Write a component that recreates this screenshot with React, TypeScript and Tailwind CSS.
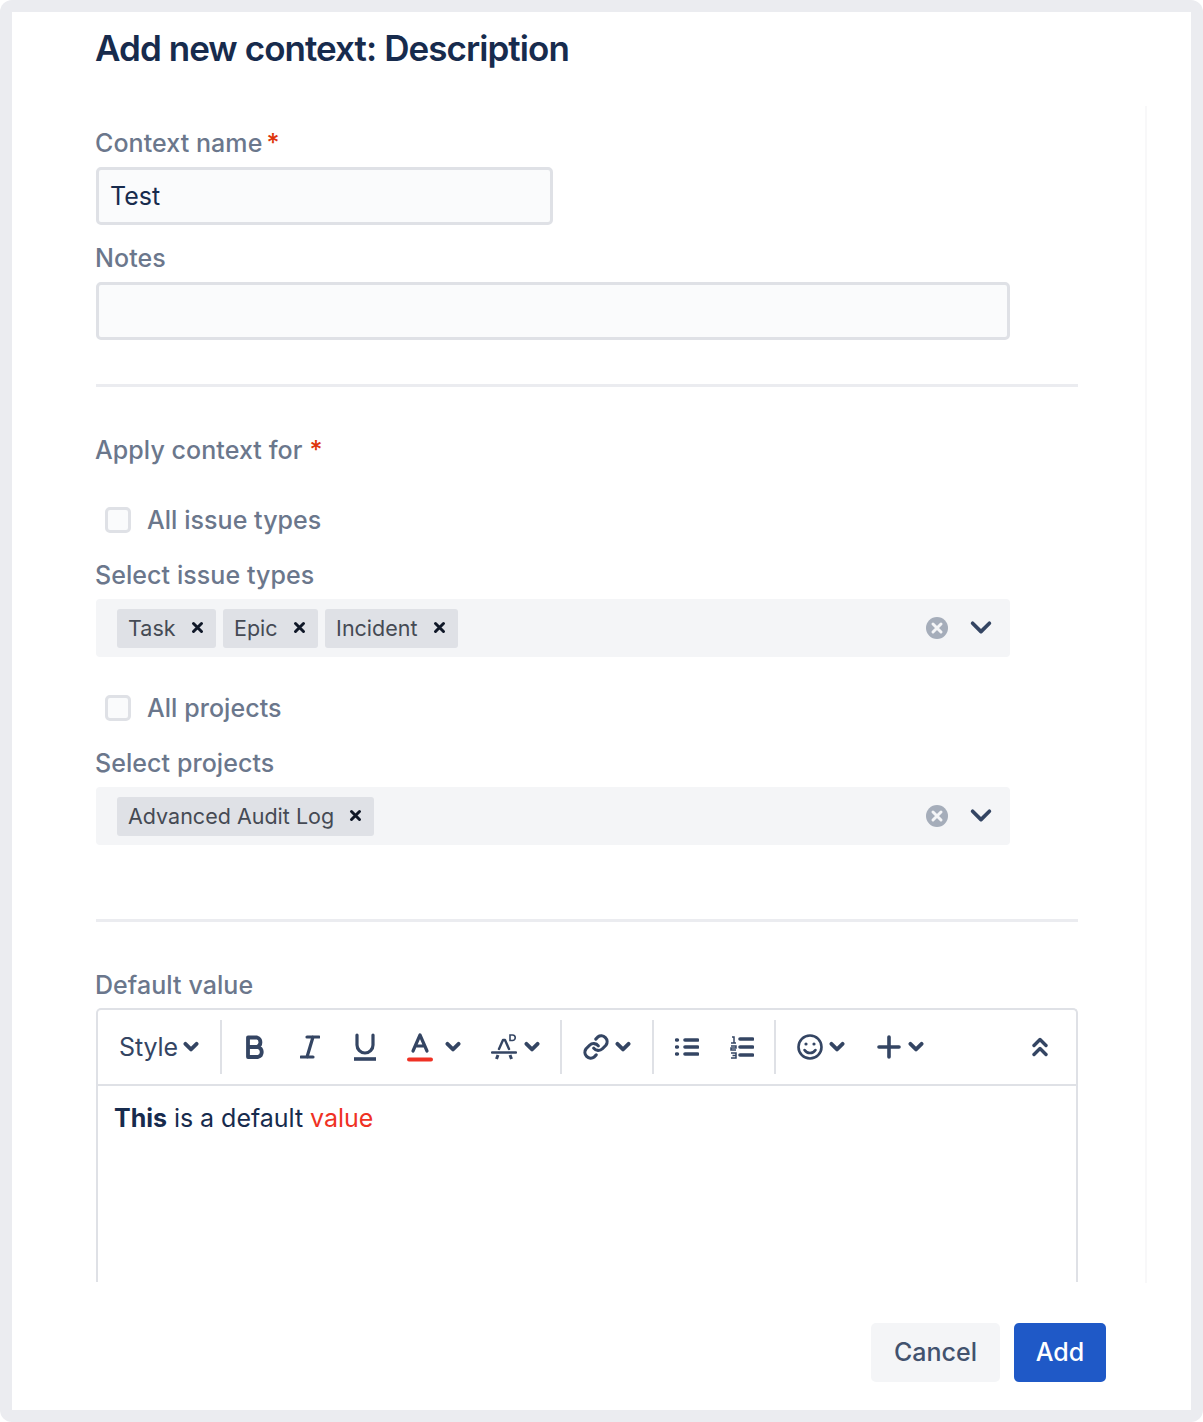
const F = { fontFamily: 'Inter, "Liberation Sans", sans-serif' };

function Label({ children, star, gap }: { children: React.ReactNode; star?: boolean; gap?: boolean }) {
  return (
    <div className="h-[28px] -ml-[1px] text-[25px] leading-[28px] font-medium text-[#6b778c] tracking-[0.07px] flex">
      <span>{children}</span>
      {star && <span className={`text-[#de350b] ${gap ? 'ml-[7px]' : 'ml-[4px]'}`}>*</span>}
    </div>
  );
}

function Chevron({ w = 14, sw = 3.4, c = '#344563' }: { w?: number; sw?: number; c?: string }) {
  return (
    <svg width={w} height={w * 0.7} viewBox="0 0 14 10" fill="none">
      <path d="M2 2.5 7 7.5 12 2.5" stroke={c} strokeWidth={sw} strokeLinecap="round" strokeLinejoin="round" />
    </svg>
  );
}

function Tag({ text }: { text: string }) {
  return (
    <div className="h-[39px] flex items-center rounded-[3px] bg-[#dfe1e6] pl-[11px] pr-[12px] text-[21.5px] text-[#454a54]">
      <span className="mt-[1px]">{text}</span>
      <svg className="ml-[15px] -mt-[2px]" width="13" height="13" viewBox="0 0 13 13" fill="none">
        <path d="M2.5 2.5 10.5 10.5M10.5 2.5 2.5 10.5" stroke="#101828" strokeWidth="3" strokeLinecap="round" />
      </svg>
    </div>
  );
}

function SelectBox({ children }: { children: React.ReactNode }) {
  return (
    <div className="w-[914px] h-[58px] rounded-[4px] bg-[#f4f5f7] flex items-center pl-[21px]">
      <div className="flex-1 flex items-center gap-[7.5px]">{children}</div>
      <svg className="mr-[20px]" width="24" height="24" viewBox="0 0 24 24">
        <circle cx="12" cy="12" r="11" fill="#a5adba" />
        <path d="M8 8 16 16M16 8 8 16" stroke="#f4f5f7" strokeWidth="3" strokeLinecap="round" />
      </svg>
      <div className="mr-[17px] -mt-[2px]">
        <Chevron w={24} sw={2.2} />
      </div>
    </div>
  );
}

function Check({ children }: { children: React.ReactNode }) {
  return (
    <div className="flex items-center h-[28px] pl-[9px]">
      <div className="w-[26px] h-[26px] rounded-[5px] border-[3px] border-[#dfe1e6] bg-[#fafbfc]" />
      <span className="ml-[16px] text-[25px] leading-[28px] font-medium text-[#6b778c] tracking-[0.05px]">{children}</span>
    </div>
  );
}

function Sep({ ml, mr }: { ml: string; mr: string }) {
  return <div className={`w-[2px] h-[54px] bg-[#dfe1e6] ${ml} ${mr}`} />;
}

const I = '#344563';

export default function App() {
  return (
    <div className="w-[1203px] h-[1422px] bg-[#ebecf0] rounded-[12px] p-[12px]" style={F}>
      <div className="w-[1179px] h-[1398px] bg-white flex flex-col">
        <div className="h-[94px] pl-[83px] pt-[15px] text-[35px] leading-[42px] font-semibold text-[#172b4d] tracking-[-0.94px]">
          Add new context: Description
        </div>
        <div className="w-[1135px] h-[1177px] border-r-[2px] border-[#f8f8f9] pl-[84px] pt-[23px] shrink-0">
          <Label star>Context name</Label>
          <div className="mt-[10px] w-[457px] h-[58px] rounded-[5px] border-[3px] border-[#dfe1e6] bg-[#fafbfc] flex items-center pl-[11px] pt-[1px] text-[25px] text-[#172b4d]">
            Test
          </div>
          <div className="mt-[19px]">
            <Label>Notes</Label>
          </div>
          <div className="mt-[10px] w-[914px] h-[58px] rounded-[5px] border-[3px] border-[#dfe1e6] bg-[#fafbfc]" />
          <div className="mt-[44px] w-[982px] h-[3px] bg-[#ebecf0]" />
          <div className="mt-[49px]">
            <Label star gap>Apply context for</Label>
          </div>
          <div className="mt-[42px]">
            <Check>All issue types</Check>
          </div>
          <div className="mt-[27px]">
            <Label>Select issue types</Label>
          </div>
          <div className="mt-[10px]">
            <SelectBox>
              <Tag text="Task" />
              <Tag text="Epic" />
              <Tag text="Incident" />
            </SelectBox>
          </div>
          <div className="mt-[37px]">
            <Check>All projects</Check>
          </div>
          <div className="mt-[27px]">
            <Label>Select projects</Label>
          </div>
          <div className="mt-[10px]">
            <SelectBox>
              <Tag text="Advanced Audit Log" />
            </SelectBox>
          </div>
          <div className="mt-[74px] w-[982px] h-[3px] bg-[#ebecf0]" />
          <div className="mt-[49px]">
            <Label>Default value</Label>
          </div>
          <div className="mt-[9px] w-[982px] h-[274px] rounded-t-[5px] border-[2px] border-b-0 border-[#dfe1e6]">
            <div className="h-[76px] border-b-[2px] border-[#dfe1e6] flex items-center pl-[21px] text-[#344563]">
              <span className="text-[25px] tracking-[-0.1px] mt-[1px]">Style</span>
              <span className="ml-[5px]"><Chevron w={16} /></span>
              <Sep ml="ml-[21px]" mr="mr-[22px]" />
              <svg width="24" height="26" viewBox="0 0 24 26" fill="none" stroke={I} strokeWidth="3.8" strokeLinejoin="round">
                <path d="M4 3.5h9a5 5 0 0 1 0 9.5H4zM4 13h10a5.2 5.2 0 0 1 0 10H4z" />
              </svg>
              <svg className="ml-[32px]" width="20" height="24" viewBox="0 0 20 24" fill="none" stroke={I} strokeWidth="3.2" strokeLinecap="round">
                <path d="M7 2h12M1 22h12M13 2 7 22" />
              </svg>
              <svg className="ml-[33px]" width="24" height="28" viewBox="0 0 24 28" fill="none" stroke={I} strokeWidth="3.2">
                <path d="M4 2v10a8 8 0 0 0 16 0V2" strokeLinecap="round" />
                <path d="M1 26h22" strokeWidth="3.6" />
              </svg>
              <svg className="ml-[30px]" width="26" height="30" viewBox="0 0 26 30" fill="none">
                <path d="M6 19 13 3l7 16M8.5 14h9" stroke={I} strokeWidth="3.2" strokeLinecap="round" strokeLinejoin="round" />
                <path d="M2 27.5h22" stroke="#ef3124" strokeWidth="4" strokeLinecap="round" />
              </svg>
              <span className="ml-[12px]"><Chevron w={16} /></span>
              <svg className="ml-[30px]" width="26" height="26" viewBox="0 0 26 26" fill="none" stroke={I}>
                <path d="M8 15l4-9h2l4 9M1 18.5h24" strokeWidth="2.4" strokeLinecap="round" strokeLinejoin="round" />
                <path d="M7 21l-1.5 4M19 21l1.5 4" strokeWidth="3" />
                <path d="M19 1h2.5a2.5 2.5 0 0 1 0 5.5H19z" strokeWidth="1.6" />
              </svg>
              <span className="ml-[7px]"><Chevron w={16} /></span>
              <Sep ml="ml-[20px]" mr="mr-[20px]" />
              <svg width="28" height="28" viewBox="0 0 24 24" fill="none" stroke={I} strokeWidth="2.7" strokeLinecap="round" strokeLinejoin="round">
                <path d="M10 13a5 5 0 0 0 7.5.5l3-3a5 5 0 0 0-7-7l-1.7 1.7" />
                <path d="M14 11a5 5 0 0 0-7.5-.5l-3 3a5 5 0 0 0 7 7l1.7-1.7" />
              </svg>
              <span className="ml-[5px]"><Chevron w={16} /></span>
              <Sep ml="ml-[21px]" mr="mr-[21px]" />
              <svg width="24" height="20" viewBox="0 0 24 20" fill="none" stroke={I}>
                <path d="M10 3h12.5M10 10h12.5M10 17h12.5" strokeWidth="3.6" strokeLinecap="round" />
                <path d="M1.5 3h1M1.5 10h1M1.5 17h1" strokeWidth="3.4" strokeLinecap="round" />
              </svg>
              <svg className="ml-[31px]" width="24" height="24" viewBox="0 0 24 24" fill="none" stroke={I}>
                <path d="M10 4h12.5M10 12h12.5M10 20h12.5" strokeWidth="3.6" strokeLinecap="round" />
                <path d="M2 2h2v6M1 8h5M1 11h5v2H1v2h5M1 18h5v2.5H2.5M6 20.5V23H1" strokeWidth="1.5" />
              </svg>
              <Sep ml="ml-[20px]" mr="mr-[20px]" />
              <svg width="28" height="28" viewBox="0 0 28 28" fill="none" stroke={I} strokeWidth="2.6" strokeLinecap="round">
                <circle cx="14" cy="14" r="11.5" />
                <path d="M8.5 17a6.5 6.5 0 0 0 11 0" />
                <circle cx="10" cy="11" r="0.8" fill={I} strokeWidth="1.6" />
                <circle cx="18" cy="11" r="0.8" fill={I} strokeWidth="1.6" />
              </svg>
              <span className="ml-[5px]"><Chevron w={16} /></span>
              <svg className="ml-[32px]" width="24" height="24" viewBox="0 0 24 24" fill="none" stroke={I} strokeWidth="3.6" strokeLinecap="round">
                <path d="M12 2v20M2 12h20" />
              </svg>
              <span className="ml-[7px]"><Chevron w={16} /></span>
              <svg className="ml-[108px]" width="16" height="20" viewBox="0 0 16 20" fill="none" stroke={I} strokeWidth="3.4" strokeLinecap="round" strokeLinejoin="round">
                <path d="M2 8.5 8 2.5l6 6M2 17.5l6-6 6 6" />
              </svg>
            </div>
            <div className="pl-[16px] pt-[17px] text-[25px] leading-[30px] text-[#172b4d] tracking-[-0.03px]">
              <span className="font-bold">This</span> is a default <span className="text-[#ef3124]">value</span>
            </div>
          </div>
        </div>
        <div className="flex justify-end gap-[14px] pr-[85px] pt-[40px]">
          <div className="w-[129px] h-[59px] rounded-[5px] bg-[#f4f5f7] flex items-center justify-center pt-[1px] text-[25px] font-medium text-[#42526e]">
            Cancel
          </div>
          <div className="w-[92px] h-[59px] rounded-[5px] bg-[#1f59c7] flex items-center justify-center pt-[1px] text-[25px] font-medium text-white">
            Add
          </div>
        </div>
      </div>
    </div>
  );
}
